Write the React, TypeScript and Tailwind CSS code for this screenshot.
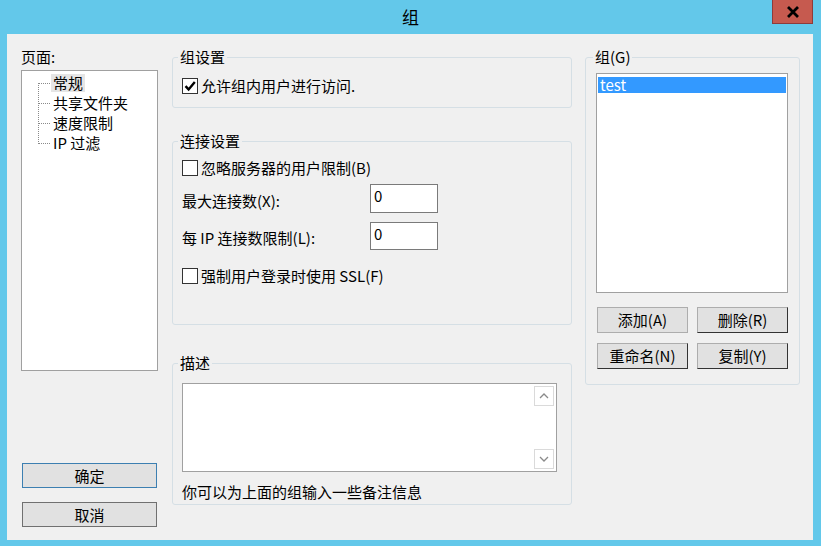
import React from "react";

function CheckBox({ checked }: { checked?: boolean }) {
	return (
		<span className="flex h-[16px] w-[16px] shrink-0 items-center justify-center border border-[#333333] bg-white">
			{checked ? (
				<svg width="12" height="12" viewBox="0 0 12 12">
					<path d="M1.5 6.2 L4.6 9.4 L10.8 2" fill="none" stroke="#000" strokeWidth="2.4" />
				</svg>
			) : null}
		</span>
	);
}

function Btn({ label, className = "", border = "border-[#adadad]" }: { label: string; className?: string; border?: string }) {
	return (
		<button className={`flex items-center justify-center border bg-[#e1e1e1] text-[15px] leading-[18px] text-black ${border} ${className}`}>
			{label}
		</button>
	);
}

function Legend({ label, className = "ml-[5px]" }: { label: string; className?: string }) {
	return <legend className={`px-[2px] text-[15px] leading-[18px] ${className}`}>{label}</legend>;
}

const treeItems = ["常规", "共享文件夹", "速度限制", "IP 过滤"];

export default function App() {
	return (
		<div className="flex h-[546px] w-[821px] flex-col bg-[#63c8ea] font-['Noto_Sans_CJK_SC',sans-serif] text-black">
			{/* title bar */}
			<div className="relative flex h-[34px] shrink-0 items-center justify-center">
				<span className="text-[17px] leading-[20px]">组</span>
				<div className="absolute right-[8px] top-0 flex h-[24px] w-[41px] items-center justify-center border border-t-0 border-[#8e3b3b] bg-[#c65a4f]">
					<svg width="14" height="12" viewBox="0 0 14 12">
						<path d="M2 1 L12 11 M12 1 L2 11" stroke="#000" strokeWidth="2.8" />
					</svg>
				</div>
			</div>

			{/* client */}
			<div className="ml-[7px] flex h-[506px] w-[806px] bg-[#f0f0f0] pl-[14px] pt-[14px]">
				{/* left column */}
				<div className="flex w-[137px] flex-col">
					<div className="text-[15px] leading-[18px]">页面:</div>
					<div className="mt-[4px] h-[301px] border border-[#a0a0a0] bg-white pl-[16px] pt-[2px]">
						<div className="flex">
							<svg width="13" height="80" viewBox="0 0 13 80" className="shrink-0">
								<path d="M0.5 10 V71 M1 10.5 H13 M1 30.5 H13 M1 50.5 H13 M1 70.5 H13" stroke="#8a8a8a" strokeWidth="1" strokeDasharray="1 1" fill="none" />
							</svg>
							<div className="flex flex-col">
								{treeItems.map((t, i) => (
									<div key={t} className="flex h-[20px] items-center">
										<span className={`px-[2px] text-[15px] leading-[18px] ${i === 0 ? "bg-[#e5e5e5]" : ""}`}>{t}</span>
									</div>
								))}
							</div>
						</div>
					</div>
					<Btn label="确定" border="border-[#3c7fb1]" className="ml-[1px] mt-[92px] h-[25px] w-[135px]" />
					<Btn label="取消" border="border-[#707070]" className="ml-[1px] mt-[14px] h-[25px] w-[135px]" />
				</div>

				{/* middle column */}
				<div className="ml-[14px] flex w-[400px] flex-col">
					<fieldset className="h-[60px] rounded-[3px] border border-[#d5dfe5]">
						<Legend label="组设置" />
						<div className="mt-[11px] flex items-center pl-[9px]">
							<CheckBox checked />
							<span className="ml-[3px] text-[15px] leading-[18px]">允许组内用户进行访问.</span>
						</div>
					</fieldset>

					<fieldset className="mt-[24px] h-[193px] rounded-[3px] border border-[#d5dfe5]">
						<Legend label="连接设置" />
						<div className="flex flex-col pl-[9px]">
							<div className="mt-[9px] flex items-center">
								<CheckBox />
								<span className="ml-[3px] text-[15px] leading-[18px]">忽略服务器的用户限制(B)</span>
							</div>
							<div className="mt-[7px] flex items-center">
								<span className="mt-[4px] w-[188px] text-[15px] leading-[18px]">最大连接数(X):</span>
								<div className="h-[29px] w-[68px] border border-[#7a7a7a] bg-white px-[3px] text-[15px] leading-[22px]">0</div>
							</div>
							<div className="mt-[9px] flex items-center">
								<span className="mt-[4px] w-[188px] text-[15px] leading-[18px]">每 IP 连接数限制(L):</span>
								<div className="h-[28px] w-[68px] border border-[#7a7a7a] bg-white px-[3px] text-[15px] leading-[22px]">0</div>
							</div>
							<div className="mt-[17px] flex items-center">
								<CheckBox />
								<span className="ml-[3px] text-[15px] leading-[18px]">强制用户登录时使用 SSL(F)</span>
							</div>
						</div>
					</fieldset>

					<fieldset className="mt-[29px] h-[151px] rounded-[3px] border border-[#d5dfe5]">
						<Legend label="描述" />
						<div className="flex flex-col pl-[9px]">
							<div className="mt-[11px] flex h-[89px] w-[375px] justify-end border border-[#a0a0a0] bg-white p-[2px]">
								<div className="flex w-[20px] flex-col justify-between">
									<div className="flex h-[20px] items-center justify-center border border-[#dadada] bg-white">
										<svg width="10" height="6" viewBox="0 0 10 6">
											<path d="M1 5 L5 1 L9 5" fill="none" stroke="#8a8a8a" strokeWidth="1.3" />
										</svg>
									</div>
									<div className="flex h-[20px] items-center justify-center border border-[#dadada] bg-white">
										<svg width="10" height="6" viewBox="0 0 10 6">
											<path d="M1 1 L5 5 L9 1" fill="none" stroke="#8a8a8a" strokeWidth="1.3" />
										</svg>
									</div>
								</div>
							</div>
							<div className="mt-[10px] text-[15px] leading-[20px]">你可以为上面的组输入一些备注信息</div>
						</div>
					</fieldset>
				</div>

				{/* right column */}
				<div className="ml-[13px] flex w-[215px] flex-col">
					<fieldset className="h-[337px] rounded-[3px] border border-[#d5dfe5]">
						<Legend label="组(G)" className="ml-[7px]" />
						<div className="flex flex-col pl-[10px]">
							<div className="mt-[7px] h-[220px] w-[192px] border border-[#a0a0a0] bg-white px-[1px] pt-[3px]">
								<div className="h-[16px] bg-[#3399ff] pl-[2px] text-[15px] leading-[16px] text-white">test</div>
							</div>
							<div className="ml-[1px] mt-[14px] flex gap-[9px]">
								<Btn label="添加(A)" className="h-[26px] w-[91px]" />
								<Btn label="删除(R)" border="border-[#adadad] border-b-[#333333] border-r-[#333333]" className="h-[26px] w-[91px]" />
							</div>
							<div className="ml-[1px] mt-[10px] flex gap-[9px]">
								<Btn label="重命名(N)" border="border-[#adadad] border-b-[#333333] border-r-[#333333]" className="h-[26px] w-[91px]" />
								<Btn label="复制(Y)" border="border-[#adadad] border-b-[#333333] border-r-[#333333]" className="h-[26px] w-[91px]" />
							</div>
						</div>
					</fieldset>
				</div>
			</div>
		</div>
	);
}
